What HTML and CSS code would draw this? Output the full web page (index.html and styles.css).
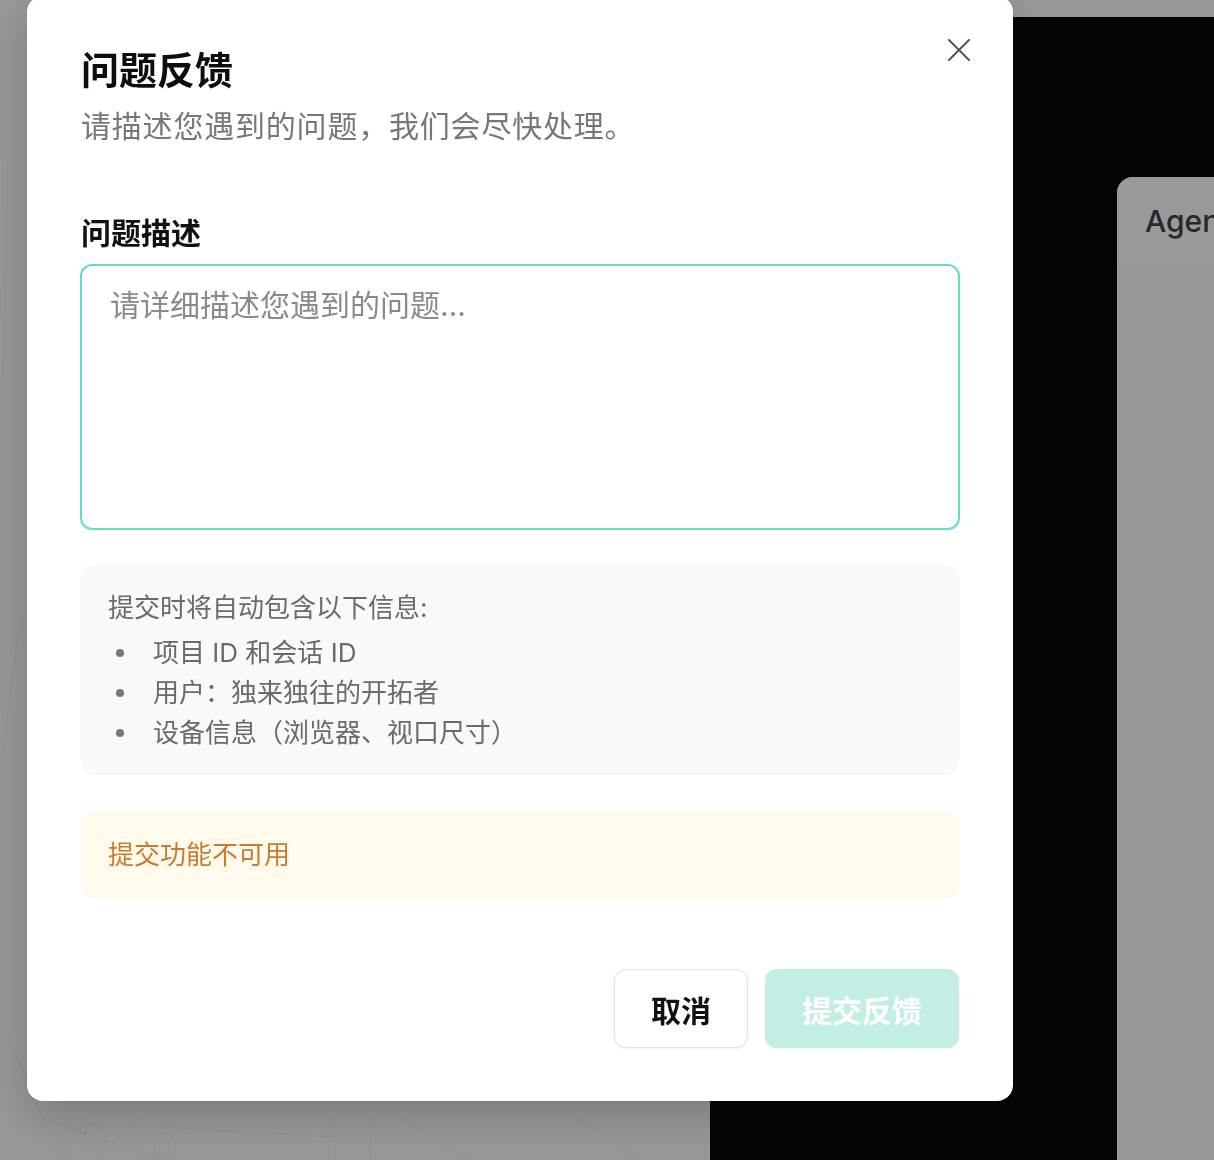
FILE: index.html
```html
<!DOCTYPE html>
<html lang="zh-CN">
<head>
    <meta charset="UTF-8">
    <meta name="viewport" content="width=device-width, initial-scale=1.0">
    <title>问题反馈</title>
    <link rel="stylesheet" href="styles.css">
</head>
<body>
    <div class="scene">
        <div class="canvas-area">
            <svg class="network" width="710" height="1143" viewBox="0 0 710 1143">
                <g fill="none" stroke="#000" stroke-opacity="0.025" stroke-width="2">
                    <path d="M0 1000 L60 1143"/>
                    <path d="M8 140 L0 520"/>
                    <path d="M20 600 L0 760"/>
                    <path d="M95 1090 L60 1143"/>
                    <path d="M40 1100 L160 1143"/>
                    <path d="M150 1090 L95 1143"/>
                    <path d="M160 1110 L335 1120"/>
                    <path d="M335 1095 L335 1143"/>
                    <path d="M370 1095 L370 1143"/>
                    <path d="M400 1100 L470 1143"/>
                    <path d="M560 1090 L640 1143"/>
                    <ellipse cx="95" cy="1120" rx="10" ry="14"/>
                    <ellipse cx="165" cy="1130" rx="10" ry="14"/>
                </g>
            </svg>
        </div>
        <div class="workspace">
            <div class="agent-card">
                <div class="agent-card-header">Agent</div>
                <div class="agent-card-body"></div>
            </div>
        </div>
    </div>

    <div class="overlay">
        <div class="modal">
            <button class="close-btn" aria-label="关闭">
                <svg width="22" height="22" viewBox="0 0 22 22">
                    <path d="M1 1 L21 21 M21 1 L1 21" stroke="currentColor" stroke-width="2" stroke-linecap="round"/>
                </svg>
            </button>

            <div class="modal-header">
                <h1>问题反馈</h1>
                <p>请描述您遇到的问题，我们会尽快处理。</p>
            </div>

            <label class="field-label" for="desc">问题描述</label>
            <textarea id="desc" class="field-input" placeholder="请详细描述您遇到的问题..."></textarea>

            <div class="info-box">
                <div class="info-title">提交时将自动包含以下信息:</div>
                <ul class="info-list">
                    <li>项目 ID 和会话 ID</li>
                    <li>用户：独来独往的开拓者</li>
                    <li>设备信息（浏览器、视口尺寸）</li>
                </ul>
            </div>

            <div class="warning-box">提交功能不可用</div>

            <div class="modal-actions">
                <button class="btn btn-cancel">取消</button>
                <button class="btn btn-submit" disabled>提交反馈</button>
            </div>
        </div>
    </div>
</body>
</html>
```

FILE: styles.css
```css
* {
    box-sizing: border-box;
}

body {
    font-family: Inter, "Noto Sans CJK SC", sans-serif;
    margin: 0;
    padding: 0;
    background-color: #fbfbfb;
    height: 100vh;
    overflow: hidden;
}

.scene {
    display: grid;
    grid-template-columns: 710px 1fr;
    height: 100vh;
    padding-top: 17px;
}

.canvas-area {
    overflow: hidden;
}

.network {
    display: block;
}

.workspace {
    background-color: #05080d;
    display: flex;
    padding: 160px 0 0 407px;
}

.agent-card {
    flex: 1;
    display: flex;
    flex-direction: column;
    background-color: #fcfcfc;
    border-top-left-radius: 16px;
    overflow: hidden;
}

.agent-card-header {
    height: 89px;
    padding: 0 28px;
    display: flex;
    align-items: center;
    font-size: 30px;
    font-weight: 500;
    color: #40444d;
    background-color: #ffffff;
    border-bottom: 1px solid #f4f4f4;
    white-space: nowrap;
}

.agent-card-body {
    flex: 1;
}

.overlay {
    position: fixed;
    inset: 0;
    background-color: rgba(0, 0, 0, 0.4);
}

.modal {
    position: absolute;
    left: 27px;
    top: -4px;
    width: 986px;
    display: flex;
    flex-direction: column;
    padding: 50px 54px 53px;
    background-color: #fff;
    border-radius: 16px;
    box-shadow: 0 16px 40px rgba(0, 0, 0, 0.18);
}

.close-btn {
    position: absolute;
    top: 43px;
    right: 43px;
    width: 22px;
    height: 22px;
    padding: 0;
    border: none;
    background: none;
    color: #555;
    cursor: pointer;
}

.close-btn svg {
    display: block;
}

.modal-header h1 {
    margin: 0;
    font-size: 38px;
    line-height: 48px;
    font-weight: 700;
    color: #0d0d0d;
}

.modal-header p {
    margin: 12px 0 0;
    font-size: 30px;
    line-height: 40px;
    letter-spacing: 0.8px;
    color: #777;
}

.field-label {
    margin-top: 67px;
    font-size: 30px;
    line-height: 40px;
    font-weight: 700;
    color: #111;
}

.field-input {
    margin: 11px -1px 0;
    height: 266px;
    padding: 19px 28px;
    border: 2px solid #6bd9c8;
    border-radius: 12px;
    font-family: inherit;
    font-size: 30px;
    line-height: 40px;
    color: #222;
    resize: none;
    outline: none;
}

.field-input::placeholder {
    color: #8a8a8a;
}

.info-box {
    margin-top: 35px;
    padding: 23px 27px 22px;
    background-color: #f9f9f9;
    border-radius: 12px;
    color: #6a6a6a;
    font-size: 26px;
    line-height: 40px;
}

.info-list {
    list-style: none;
    margin: 5px 0 0;
    padding: 0;
}

.info-list li {
    position: relative;
    padding-left: 45px;
}

.info-list li::before {
    content: "";
    position: absolute;
    left: 8px;
    top: 16px;
    width: 8px;
    height: 8px;
    border-radius: 50%;
    background-color: #777;
}

.warning-box {
    margin-top: 36px;
    padding: 24px 27px 23px;
    background-color: #fffaec;
    border-radius: 12px;
    color: #c97b30;
    font-size: 26px;
    line-height: 40px;
}

.modal-actions {
    margin-top: 71px;
    display: flex;
    justify-content: flex-end;
    gap: 17px;
}

.btn {
    height: 79px;
    border-radius: 12px;
    font-family: inherit;
    font-size: 30px;
    font-weight: 700;
    cursor: pointer;
}

.btn-cancel {
    width: 134px;
    background-color: #fff;
    color: #111;
    border: 1px solid #e3e3e3;
    box-shadow: 0 1px 3px rgba(0, 0, 0, 0.06);
}

.btn-submit {
    width: 194px;
    background-color: #c3eee6;
    color: #fff;
    border: none;
    box-shadow: 0 1px 3px rgba(0, 0, 0, 0.05);
    cursor: not-allowed;
}
```
